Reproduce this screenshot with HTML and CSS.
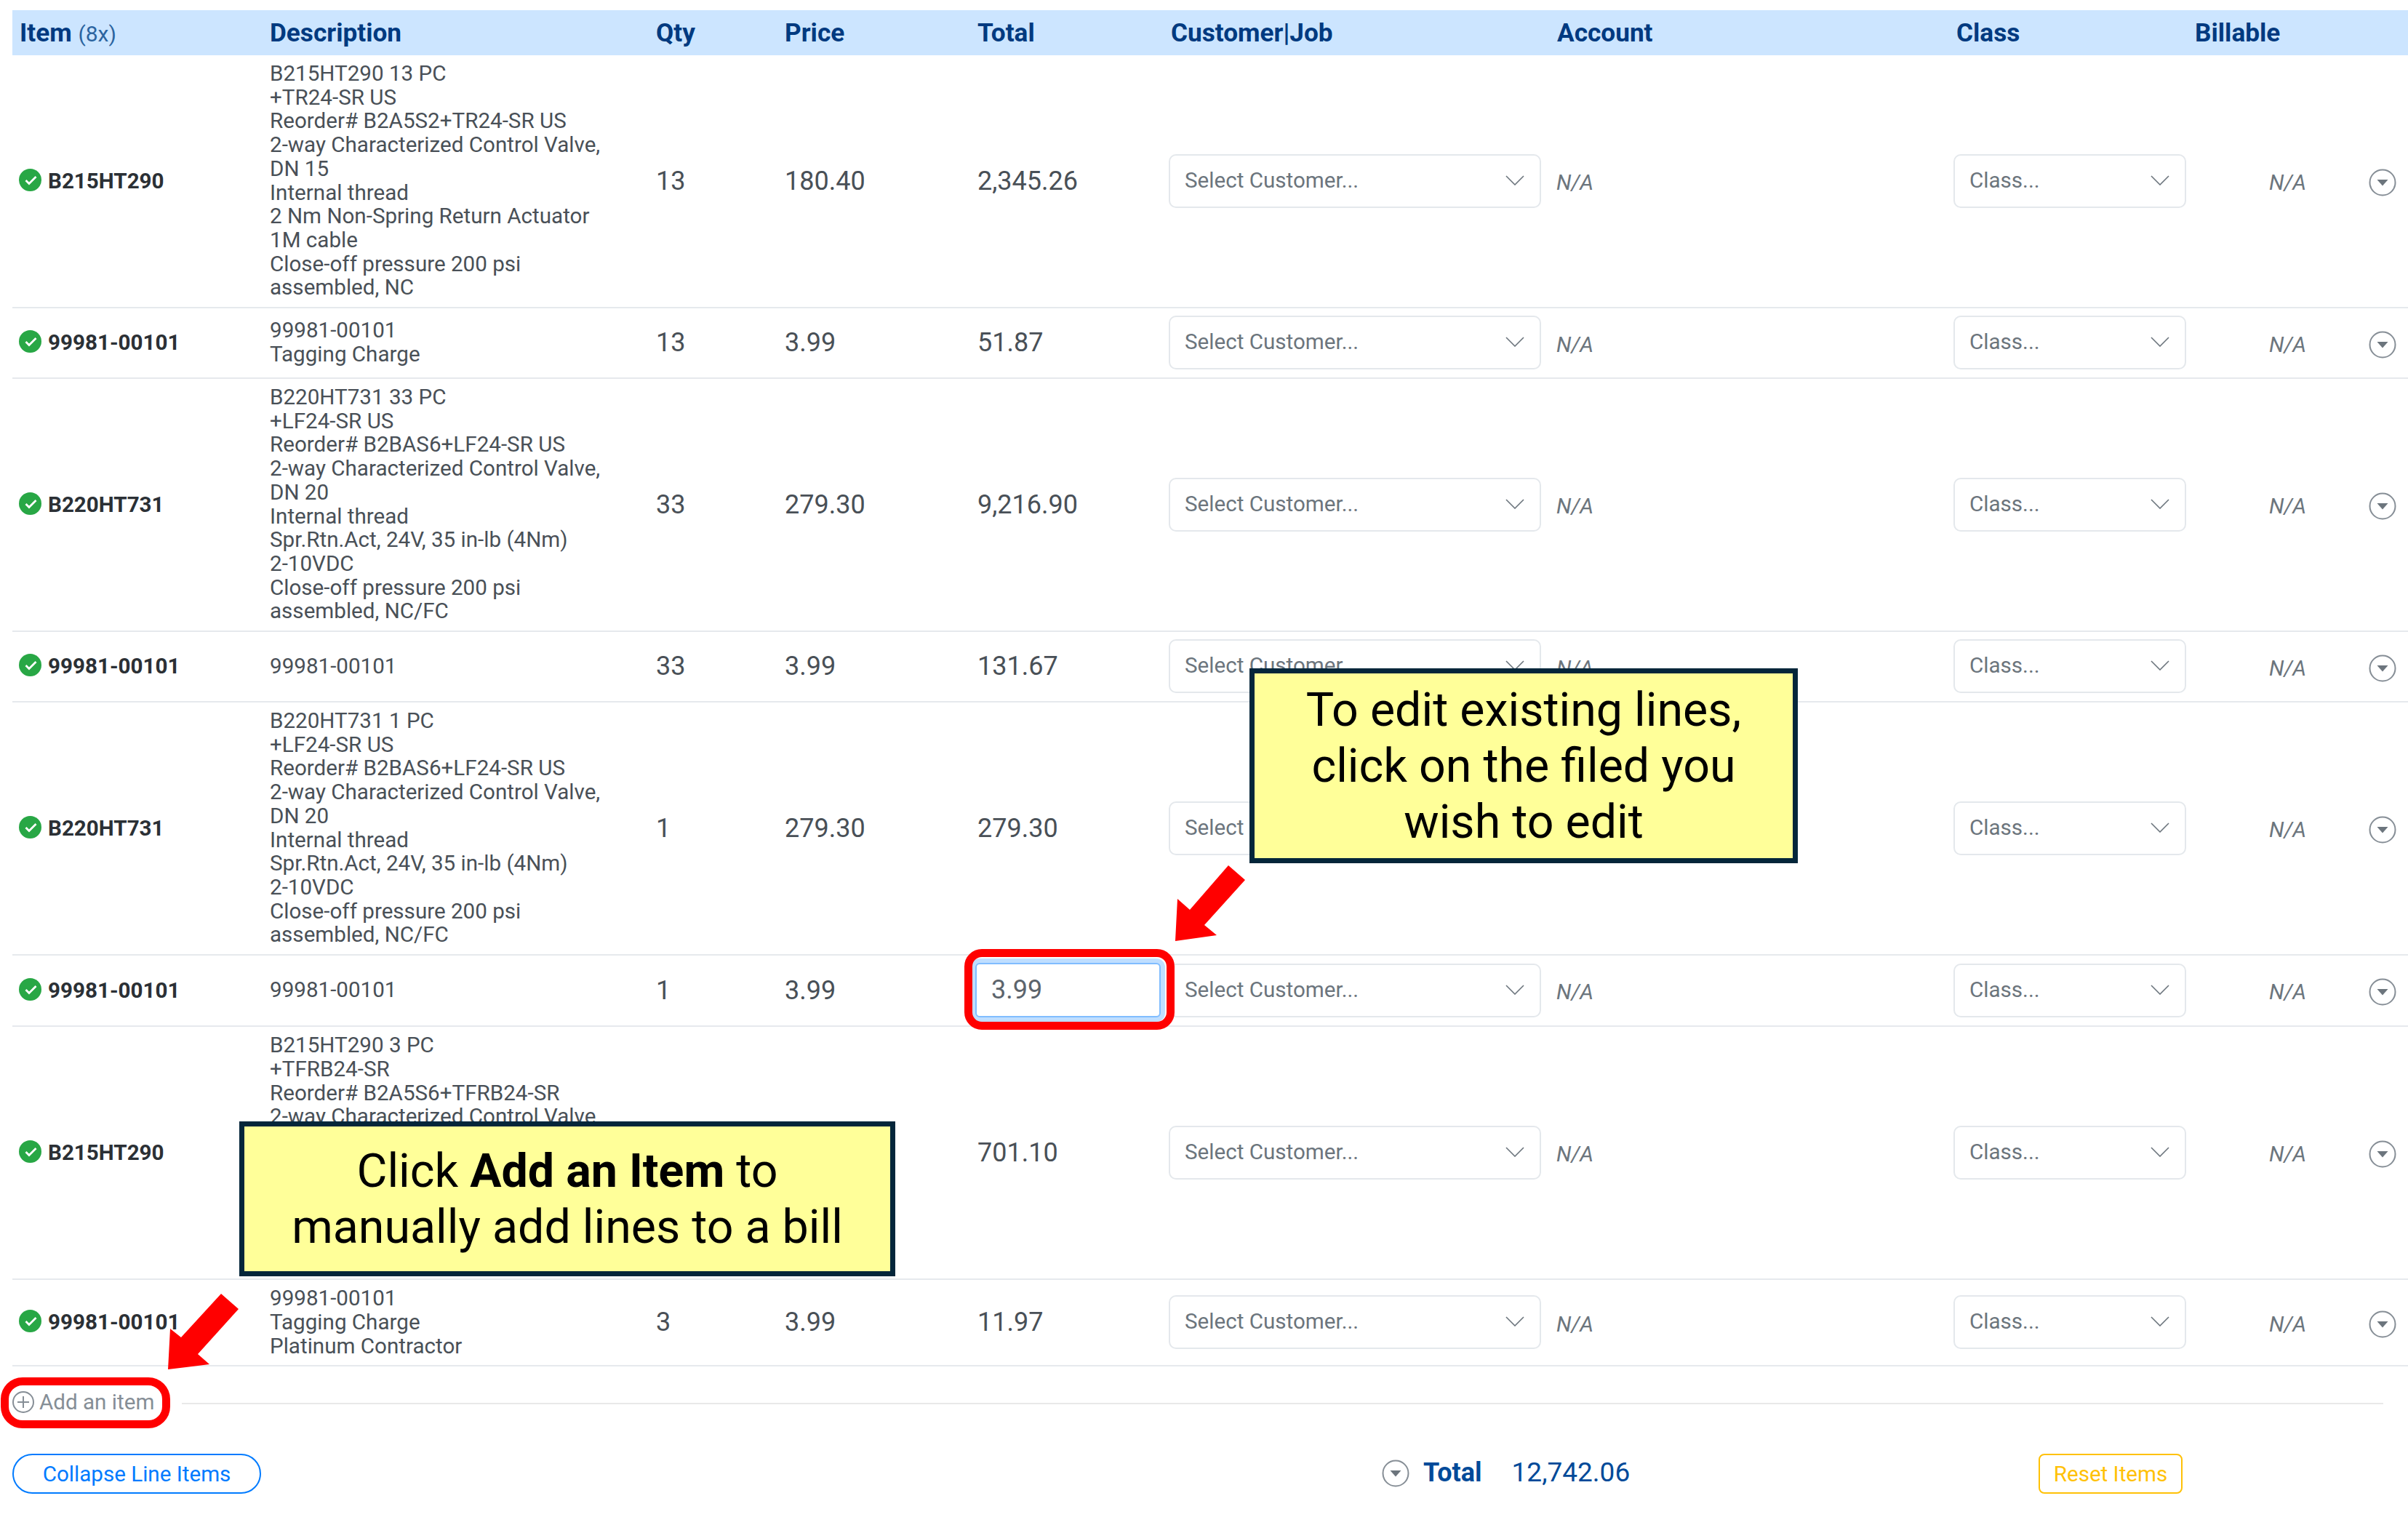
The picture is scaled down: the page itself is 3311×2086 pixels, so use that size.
FILE: index.html
```html
<!DOCTYPE html>
<html>
<head>
    <title>Bill Line Items</title>
    <link rel="stylesheet" href="styles.css">
</head>
<body>
    <div class="bill">
        <table class="lines">
            <thead>
                <tr>
                    <th class="col-item">Item <span class="count">(8x)</span></th>
                    <th class="col-desc">Description</th>
                    <th class="col-qty">Qty</th>
                    <th class="col-price">Price</th>
                    <th class="col-total">Total</th>
                    <th class="col-cust">Customer|Job</th>
                    <th class="col-acct">Account</th>
                    <th class="col-class">Class</th>
                    <th class="col-bill">Billable</th>
                    <th class="col-more"></th>
                </tr>
            </thead>
            <tbody>
                <tr>
                    <td class="item"><svg class="ok" viewBox="0 0 31 31"><circle cx="15.5" cy="15.5" r="15.5"/><path d="M9.5 16l4.5 4.5 9.5-9.5"/></svg>B215HT290</td>
                    <td class="desc">B215HT290 13 PC<br>+TR24-SR US<br>Reorder# B2A5S2+TR24-SR US<br>2-way Characterized Control Valve,<br>DN 15<br>Internal thread<br>2 Nm Non-Spring Return Actuator<br>1M cable<br>Close-off pressure 200 psi<br>assembled, NC</td>
                    <td class="num">13</td>
                    <td class="num">180.40</td>
                    <td class="num">2,345.26</td>
                    <td><div class="select"><span>Select Customer...</span><svg class="chev" viewBox="0 0 26 14"><path d="M1 1l12 12L25 1"/></svg></div></td>
                    <td class="na">N/A</td>
                    <td><div class="select"><span>Class...</span><svg class="chev" viewBox="0 0 26 14"><path d="M1 1l12 12L25 1"/></svg></div></td>
                    <td class="na na-bill">N/A</td>
                    <td class="more"><svg class="drop" viewBox="0 0 38 38"><circle cx="19" cy="19" r="17.5"/><path class="tri" d="M11.5 15h15L19 23.5z"/></svg></td>
                </tr>
                <tr>
                    <td class="item"><svg class="ok" viewBox="0 0 31 31"><circle cx="15.5" cy="15.5" r="15.5"/><path d="M9.5 16l4.5 4.5 9.5-9.5"/></svg>99981-00101</td>
                    <td class="desc">99981-00101<br>Tagging Charge</td>
                    <td class="num">13</td>
                    <td class="num">3.99</td>
                    <td class="num">51.87</td>
                    <td><div class="select"><span>Select Customer...</span><svg class="chev" viewBox="0 0 26 14"><path d="M1 1l12 12L25 1"/></svg></div></td>
                    <td class="na">N/A</td>
                    <td><div class="select"><span>Class...</span><svg class="chev" viewBox="0 0 26 14"><path d="M1 1l12 12L25 1"/></svg></div></td>
                    <td class="na na-bill">N/A</td>
                    <td class="more"><svg class="drop" viewBox="0 0 38 38"><circle cx="19" cy="19" r="17.5"/><path class="tri" d="M11.5 15h15L19 23.5z"/></svg></td>
                </tr>
                <tr>
                    <td class="item"><svg class="ok" viewBox="0 0 31 31"><circle cx="15.5" cy="15.5" r="15.5"/><path d="M9.5 16l4.5 4.5 9.5-9.5"/></svg>B220HT731</td>
                    <td class="desc">B220HT731 33 PC<br>+LF24-SR US<br>Reorder# B2BAS6+LF24-SR US<br>2-way Characterized Control Valve,<br>DN 20<br>Internal thread<br>Spr.Rtn.Act, 24V, 35 in-lb (4Nm)<br>2-10VDC<br>Close-off pressure 200 psi<br>assembled, NC/FC</td>
                    <td class="num">33</td>
                    <td class="num">279.30</td>
                    <td class="num">9,216.90</td>
                    <td><div class="select"><span>Select Customer...</span><svg class="chev" viewBox="0 0 26 14"><path d="M1 1l12 12L25 1"/></svg></div></td>
                    <td class="na">N/A</td>
                    <td><div class="select"><span>Class...</span><svg class="chev" viewBox="0 0 26 14"><path d="M1 1l12 12L25 1"/></svg></div></td>
                    <td class="na na-bill">N/A</td>
                    <td class="more"><svg class="drop" viewBox="0 0 38 38"><circle cx="19" cy="19" r="17.5"/><path class="tri" d="M11.5 15h15L19 23.5z"/></svg></td>
                </tr>
                <tr>
                    <td class="item"><svg class="ok" viewBox="0 0 31 31"><circle cx="15.5" cy="15.5" r="15.5"/><path d="M9.5 16l4.5 4.5 9.5-9.5"/></svg>99981-00101</td>
                    <td class="desc">99981-00101</td>
                    <td class="num">33</td>
                    <td class="num">3.99</td>
                    <td class="num">131.67</td>
                    <td><div class="select"><span>Select Customer...</span><svg class="chev" viewBox="0 0 26 14"><path d="M1 1l12 12L25 1"/></svg></div></td>
                    <td class="na">N/A</td>
                    <td><div class="select"><span>Class...</span><svg class="chev" viewBox="0 0 26 14"><path d="M1 1l12 12L25 1"/></svg></div></td>
                    <td class="na na-bill">N/A</td>
                    <td class="more"><svg class="drop" viewBox="0 0 38 38"><circle cx="19" cy="19" r="17.5"/><path class="tri" d="M11.5 15h15L19 23.5z"/></svg></td>
                </tr>
                <tr>
                    <td class="item"><svg class="ok" viewBox="0 0 31 31"><circle cx="15.5" cy="15.5" r="15.5"/><path d="M9.5 16l4.5 4.5 9.5-9.5"/></svg>B220HT731</td>
                    <td class="desc">B220HT731 1 PC<br>+LF24-SR US<br>Reorder# B2BAS6+LF24-SR US<br>2-way Characterized Control Valve,<br>DN 20<br>Internal thread<br>Spr.Rtn.Act, 24V, 35 in-lb (4Nm)<br>2-10VDC<br>Close-off pressure 200 psi<br>assembled, NC/FC</td>
                    <td class="num">1</td>
                    <td class="num">279.30</td>
                    <td class="num">279.30</td>
                    <td><div class="select"><span>Select Customer...</span><svg class="chev" viewBox="0 0 26 14"><path d="M1 1l12 12L25 1"/></svg></div></td>
                    <td class="na">N/A</td>
                    <td><div class="select"><span>Class...</span><svg class="chev" viewBox="0 0 26 14"><path d="M1 1l12 12L25 1"/></svg></div></td>
                    <td class="na na-bill">N/A</td>
                    <td class="more"><svg class="drop" viewBox="0 0 38 38"><circle cx="19" cy="19" r="17.5"/><path class="tri" d="M11.5 15h15L19 23.5z"/></svg></td>
                </tr>
                <tr>
                    <td class="item"><svg class="ok" viewBox="0 0 31 31"><circle cx="15.5" cy="15.5" r="15.5"/><path d="M9.5 16l4.5 4.5 9.5-9.5"/></svg>99981-00101</td>
                    <td class="desc">99981-00101</td>
                    <td class="num">1</td>
                    <td class="num">3.99</td>
                    <td class="num"><div class="edit-box">3.99</div></td>
                    <td><div class="select"><span>Select Customer...</span><svg class="chev" viewBox="0 0 26 14"><path d="M1 1l12 12L25 1"/></svg></div></td>
                    <td class="na">N/A</td>
                    <td><div class="select"><span>Class...</span><svg class="chev" viewBox="0 0 26 14"><path d="M1 1l12 12L25 1"/></svg></div></td>
                    <td class="na na-bill">N/A</td>
                    <td class="more"><svg class="drop" viewBox="0 0 38 38"><circle cx="19" cy="19" r="17.5"/><path class="tri" d="M11.5 15h15L19 23.5z"/></svg></td>
                </tr>
                <tr>
                    <td class="item"><svg class="ok" viewBox="0 0 31 31"><circle cx="15.5" cy="15.5" r="15.5"/><path d="M9.5 16l4.5 4.5 9.5-9.5"/></svg>B215HT290</td>
                    <td class="desc">B215HT290 3 PC<br>+TFRB24-SR<br>Reorder# B2A5S6+TFRB24-SR<br>2-way Characterized Control Valve,<br>DN 15<br>Internal thread<br>Spr.Rtn.Act, 24V, 35 in-lb (4Nm)<br>2-10VDC<br>Close-off pressure 200 psi<br>assembled, NC/FC</td>
                    <td class="num">3</td>
                    <td class="num">233.70</td>
                    <td class="num">701.10</td>
                    <td><div class="select"><span>Select Customer...</span><svg class="chev" viewBox="0 0 26 14"><path d="M1 1l12 12L25 1"/></svg></div></td>
                    <td class="na">N/A</td>
                    <td><div class="select"><span>Class...</span><svg class="chev" viewBox="0 0 26 14"><path d="M1 1l12 12L25 1"/></svg></div></td>
                    <td class="na na-bill">N/A</td>
                    <td class="more"><svg class="drop" viewBox="0 0 38 38"><circle cx="19" cy="19" r="17.5"/><path class="tri" d="M11.5 15h15L19 23.5z"/></svg></td>
                </tr>
                <tr>
                    <td class="item"><svg class="ok" viewBox="0 0 31 31"><circle cx="15.5" cy="15.5" r="15.5"/><path d="M9.5 16l4.5 4.5 9.5-9.5"/></svg>99981-00101</td>
                    <td class="desc">99981-00101<br>Tagging Charge<br>Platinum Contractor</td>
                    <td class="num">3</td>
                    <td class="num">3.99</td>
                    <td class="num">11.97</td>
                    <td><div class="select"><span>Select Customer...</span><svg class="chev" viewBox="0 0 26 14"><path d="M1 1l12 12L25 1"/></svg></div></td>
                    <td class="na">N/A</td>
                    <td><div class="select"><span>Class...</span><svg class="chev" viewBox="0 0 26 14"><path d="M1 1l12 12L25 1"/></svg></div></td>
                    <td class="na na-bill">N/A</td>
                    <td class="more"><svg class="drop" viewBox="0 0 38 38"><circle cx="19" cy="19" r="17.5"/><path class="tri" d="M11.5 15h15L19 23.5z"/></svg></td>
                </tr>
            </tbody>
        </table>

        <div class="add-row">
            <div class="add-item">
                <svg class="plus" viewBox="0 0 30 30"><circle cx="15" cy="15" r="14"/><path d="M15 7v16M7 15h16"/></svg>
                Add an item
            </div>
            <div class="add-line"></div>
        </div>

        <div class="footer-row">
            <button class="collapse-btn" type="button">Collapse Line Items</button>
            <div class="grand-total">
                <svg class="drop" viewBox="0 0 38 38"><circle cx="19" cy="19" r="17.5"/><path class="tri" d="M11.5 15h15L19 23.5z"/></svg>
                <b>Total</b>
                <span>12,742.06</span>
            </div>
            <button class="reset-btn" type="button">Reset Items</button>
        </div>

        <!-- annotations on top of the table -->
        <div class="callout callout-edit">To edit existing lines,<br>click on the filed you<br>wish to edit</div>
        <div class="callout callout-add">Click <b>Add an Item</b> to<br>manually add lines to a bill</div>
        <div class="ring ring-edit"></div>
        <div class="ring ring-add"></div>
        <svg class="arrow arrow-edit" viewBox="0 0 110 115"><path d="M79 5L102 25L46 87L63 101L6 109L9 51L26 66Z"/></svg>
        <svg class="arrow arrow-add" viewBox="0 0 110 115"><path d="M79 4L103 25L47 87L63 101L6 108L9 52L24 64Z"/></svg>
    </div>
</body>
</html>
```

FILE: styles.css
```css
body {
    margin: 0;
    font-family: Roboto, "Liberation Sans", sans-serif;
    color: #343a40;
    background: #fff;
}
.bill {
    position: relative;
    width: 3311px;
    height: 2086px;
    padding: 14px 0 0 17px;
    box-sizing: border-box;
    overflow: hidden;
}
.lines {
    width: 3294px;
    table-layout: fixed;
    border-collapse: collapse;
}
.lines th {
    box-sizing: border-box;
    height: 62px;
    padding: 0 10px;
    background: #cce5ff;
    color: #003a80;
    font-size: 35.2px;
    font-weight: 700;
    text-align: left;
    white-space: nowrap;
}
.count {
    font-size: 30px;
    font-weight: 400;
    color: #2b64a0;
}
.col-item { width: 344px; }
.col-desc { width: 531px; }
.col-qty { width: 177px; }
.col-price { width: 265px; }
.col-total { width: 263px; }
.col-cust { width: 532px; }
.col-acct { width: 547px; }
.col-class { width: 332px; }
.col-bill { width: 230px; }
.col-more { width: 73px; }
.lines .col-cust { padding-left: 13px; }
.lines .col-acct { padding-left: 12px; }
.lines .col-class { padding-left: 14px; }
.lines td {
    padding: 10px 10px 11px;
    border-bottom: 2px solid #e6e9ed;
    vertical-align: middle;
}
.lines td:nth-child(8) {
    padding-right: 2px;
}
.lines .item {
    padding-left: 9px;
    font-size: 29.6px;
    font-weight: 700;
    color: #2b3035;
    white-space: nowrap;
}
.ok {
    width: 31px;
    height: 31px;
    margin-right: 9px;
    vertical-align: -4px;
}
.ok circle { fill: #28a745; }
.ok path {
    fill: none;
    stroke: #fff;
    stroke-width: 2.8;
}
.lines .desc {
    padding-top: 9px;
    padding-bottom: 10px;
    font-size: 29.6px;
    line-height: 32.7px;
    color: #495057;
}
.num {
    font-size: 36px;
    color: #495057;
}
.select {
    display: flex;
    align-items: center;
    justify-content: space-between;
    height: 74px;
    box-sizing: border-box;
    padding: 0 21px 2px 20px;
    border: 2px solid #e4e8ec;
    border-radius: 10px;
    font-size: 29.6px;
    color: #6c757d;
}
.chev {
    width: 26px;
    height: 14px;
    fill: none;
    stroke: #6c757d;
    stroke-width: 1.6;
}
.lines .na {
    padding-top: 15px;
    padding-left: 11px;
    font-size: 29.6px;
    font-style: italic;
    color: #6c757d;
}
.lines .na-bill {
    padding-left: 112px;
}
.lines .more {
    padding-left: 19px;
}
.drop {
    display: block;
    width: 38px;
    height: 38px;
    margin-top: 5px;
}
.drop circle {
    fill: none;
    stroke: #868e96;
    stroke-width: 2;
}
.drop .tri { fill: #6c757d; }
.edit-box {
    width: 255px;
    height: 75px;
    line-height: 71px;
    box-sizing: border-box;
    margin-left: -3px;
    padding-left: 20px;
    border: 2px solid #80bdff;
    border-radius: 6px;
    box-shadow: 0 0 0 6px #bfdeff;
    background: #fff;
    color: #5c646c;
}
.add-row {
    display: flex;
    align-items: center;
    height: 98px;
    margin-right: 34px;
}
.add-item {
    display: flex;
    align-items: center;
    gap: 7px;
    font-size: 29.6px;
    color: #868e96;
}
.plus {
    width: 30px;
    height: 30px;
    fill: none;
    stroke: #868e96;
    stroke-width: 2;
}
.add-line {
    flex: 1;
    height: 2px;
    margin: 4px 0 0 38px;
    background: #e9e9e9;
}
.footer-row {
    display: flex;
    align-items: center;
    width: 3294px;
    margin-top: 22px;
}
button {
    height: 55px;
    background: #fff;
    font-family: inherit;
    font-size: 29.6px;
}
.collapse-btn {
    width: 342px;
    border: 2px solid #007bff;
    border-radius: 28px;
    color: #007bff;
}
.grand-total {
    display: flex;
    align-items: center;
    margin: 0 0 4px 1541px;
    color: #004a99;
    font-size: 37px;
}
.grand-total .drop {
    margin: 2px 19px 0 0;
}
.grand-total b {
    margin-right: 41px;
    font-size: 36px;
    font-weight: 700;
}
.reset-btn {
    width: 198px;
    margin: 0 310px 0 auto;
    border: 2px solid #ffc107;
    border-radius: 8px;
    color: #ffc107;
}
.callout {
    position: absolute;
    box-sizing: border-box;
    border: 7px solid #04263a;
    background: #ffff99;
    color: #000;
    font-size: 64.5px;
    line-height: 77px;
    text-align: center;
}
.callout-edit {
    left: 1718px;
    top: 919px;
    width: 754px;
    height: 268px;
    padding-top: 12px;
}
.callout-add {
    left: 329px;
    top: 1542px;
    width: 902px;
    height: 213px;
    padding-top: 23px;
}
.ring {
    position: absolute;
    box-sizing: border-box;
    border: 11px solid #f00;
}
.ring-edit {
    left: 1326px;
    top: 1305px;
    width: 289px;
    height: 111px;
    border-radius: 24px;
}
.ring-add {
    left: 1px;
    top: 1894px;
    width: 233px;
    height: 70px;
    border-radius: 30px;
}
.arrow {
    position: absolute;
    width: 110px;
    height: 115px;
    fill: #f00;
}
.arrow-edit {
    left: 1610px;
    top: 1185px;
}
.arrow-add {
    left: 225px;
    top: 1775px;
}
```
